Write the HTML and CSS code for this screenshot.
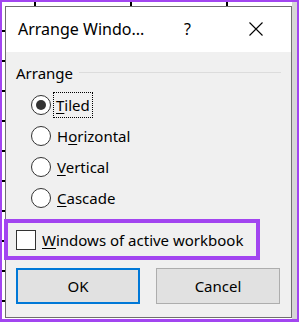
FILE: index.html
```html
<!DOCTYPE html>
<html lang="en">
  <head>
    <meta charset="UTF-8" />
    <title>Arrange Windows</title>
    <link rel="stylesheet" href="styles.css">
  </head>
  <body>
    <div class="frame">
      <div class="dialog">
        <div class="titlebar">
          <span class="title">Arrange Windo...</span>
          <span class="help">?</span>
          <svg class="close" width="14" height="14" viewBox="0 0 14 14">
            <path d="M0.5 0.5 L13.5 13.5 M13.5 0.5 L0.5 13.5" stroke="#000" stroke-width="1.1" fill="none" />
          </svg>
        </div>

        <div class="body">
          <div class="group">
            <div class="legend"><span>Arrange</span><i class="rule"></i></div>
            <ul class="options">
              <li><span class="radio checked"></span><span class="label focus"><u>T</u>iled</span></li>
              <li><span class="radio"></span><span class="label">H<u>o</u>rizontal</span></li>
              <li><span class="radio"></span><span class="label"><u>V</u>ertical</span></li>
              <li><span class="radio"></span><span class="label"><u>C</u>ascade</span></li>
            </ul>
          </div>

          <div class="highlight">
            <span class="check"></span>
            <span class="label"><u>W</u>indows of active workbook</span>
          </div>

          <div class="buttons">
            <button class="btn default">OK</button>
            <button class="btn">Cancel</button>
          </div>
        </div>
      </div>
    </div>
  </body>
</html>
```

FILE: styles.css
```css
html,
body {
  margin: 0;
  padding: 0;
}

body {
  font-family: "Noto Sans", "Open Sans", sans-serif;
  color: #000;
}

ul {
  list-style: none;
  margin: 0;
  padding: 0;
}

/* spreadsheet behind the dialog + purple screenshot frame */
.frame {
  width: 299px;
  height: 322px;
  box-sizing: border-box;
  border: 2px solid #a245f0;
  border-bottom-width: 3px;
  padding: 4px 0 0 3px;
  background-color: #fff;
  background-image:
    linear-gradient(to right, transparent 290px, #d6d6d6 290px),
    repeating-linear-gradient(to bottom, transparent 0, transparent 28px, #000 28px, #000 30px),
    repeating-linear-gradient(to right, transparent 0, transparent 32px, #000 32px, #000 34px, transparent 34px, transparent 96px);
  background-size: 100% 100%, 3px 100%, 100% 4px;
  background-repeat: no-repeat;
  overflow: hidden;
}

.dialog {
  width: 287px;
  height: 312px;
  box-sizing: border-box;
  border: 1px solid #6f6f6f;
  background: #f0f0f0;
  display: flex;
  flex-direction: column;
}

.titlebar {
  height: 45px;
  background: #fff;
  display: flex;
  align-items: center;
  padding: 0 0 0 12px;
  font-size: 16px;
}

.title {
  width: 166px;
  margin-top: -2px;
}

.help {
  width: 65px;
  margin-top: -2px;
}

.close {
  margin-top: -2px;
}

.body {
  padding: 11px 10px 0 10px;
  font-size: 15px;
}

.legend {
  display: flex;
  align-items: center;
  height: 20px;
}

.legend .rule {
  flex: 1;
  height: 1px;
  background: #dcdcdc;
  margin: 0 0 2px 6px;
}

.options {
  margin-top: 6px;
  padding-left: 15px;
}

.options li {
  height: 31px;
  display: flex;
  align-items: center;
}

.radio {
  width: 20px;
  height: 20px;
  box-sizing: border-box;
  border: 1px solid #333;
  border-radius: 50%;
  background: #fff;
  display: flex;
  align-items: center;
  justify-content: center;
  margin-right: 6px;
}

.radio.checked::after {
  content: "";
  width: 10px;
  height: 10px;
  border-radius: 50%;
  background: #333;
}

.label u {
  text-decoration-thickness: 1px;
  text-underline-offset: 2px;
}

.focus {
  outline: 1px dotted #000;
  outline-offset: 1px;
  padding: 1px 1px;
  margin-left: -2px;
}

.highlight {
  margin: 6px 0 0 -12px;
  width: 256px;
  height: 41px;
  box-sizing: border-box;
  border: 4px solid #a245f0;
  display: flex;
  align-items: center;
  padding-left: 8px;
}

.check {
  width: 20px;
  height: 20px;
  box-sizing: border-box;
  border: 1px solid #333;
  background: #fff;
  margin-right: 6px;
}

.buttons {
  display: flex;
  gap: 16px;
  margin-top: 8px;
}

.btn {
  width: 124px;
  height: 36px;
  box-sizing: border-box;
  border: 1px solid #adadad;
  background: #e1e1e1;
  font-family: inherit;
  font-size: 15px;
  color: #000;
  padding: 0;
}

.btn.default {
  border: 2px solid #0078d7;
}
```
